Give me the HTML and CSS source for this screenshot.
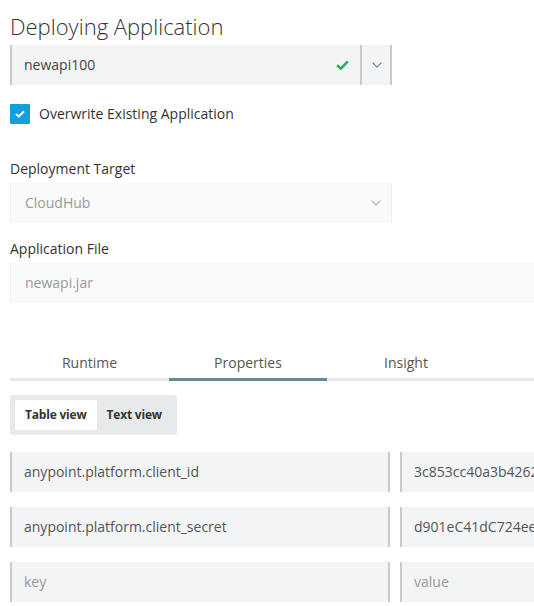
FILE: index.html
```html
<!DOCTYPE html>
<html>
<head>
<meta charset="utf-8">
<link rel="stylesheet" href="styles.css">
</head>
<body>
<div class="page">
  <h1 class="title">Deploying Application</h1>

  <div class="combo">
    <div class="combo-field">
      <span class="combo-text">newapi100</span>
      <svg class="ok" width="13" height="10" viewBox="0 0 13 10"><path d="M1.2 5.2 L4.8 8.6 L11.8 1.4" fill="none" stroke="#1fb25a" stroke-width="2.6" stroke-linejoin="miter"/></svg>
    </div>
    <div class="combo-btn">
      <svg width="10" height="6" viewBox="0 0 10 6"><polyline points="0.6,0.6 5,5.2 9.4,0.6" fill="none" stroke="#6f8092" stroke-width="1.2"/></svg>
    </div>
  </div>

  <label class="check-row">
    <span class="checkbox">
      <svg width="10" height="8" viewBox="0 0 10 8"><path d="M1 4 L3.8 6.6 L9 1.2" fill="none" stroke="#fff" stroke-width="2"/></svg>
    </span>
    <span class="check-label">Overwrite Existing Application</span>
  </label>

  <div class="group first">
    <div class="label">Deployment Target</div>
    <div class="select">
      <span class="muted">CloudHub</span>
      <svg width="10" height="6" viewBox="0 0 10 6"><polyline points="0.6,0.6 5,5.2 9.4,0.6" fill="none" stroke="#a7b0b9" stroke-width="1.1"/></svg>
    </div>
  </div>

  <div class="group">
    <div class="label">Application File</div>
    <div class="file-input"><span class="muted">newapi.jar</span></div>
  </div>

  <div class="tabs">
    <div class="tab">Runtime</div>
    <div class="tab active">Properties</div>
    <div class="tab">Insight</div>
  </div>

  <div class="toggle">
    <div class="toggle-btn on">Table view</div>
    <div class="toggle-btn">Text view</div>
  </div>

  <div class="rows">
    <div class="row">
      <div class="cell key">anypoint.platform.client_id</div>
      <div class="cell val">3c853cc40a3b4262b8e1a4c9f5e7d8a1</div>
    </div>
    <div class="row">
      <div class="cell key">anypoint.platform.client_secret</div>
      <div class="cell val">d901eC41dC724ee8B39b5a3F6C1e2D04</div>
    </div>
    <div class="row">
      <div class="cell key placeholder">key</div>
      <div class="cell val placeholder">value</div>
    </div>
  </div>
</div>
</body>
</html>
```

FILE: styles.css
```css
html, body {
  margin: 0;
  padding: 0;
  background: #fff;
  overflow: hidden;
}
body {
  font-family: "Open Sans", "Liberation Sans", sans-serif;
  font-size: 14px;
  line-height: 20px;
  color: #333;
}
.page {
  width: 534px;
  padding-left: 10px;
  box-sizing: border-box;
  overflow: hidden;
}
.title {
  margin: 12px 0 5px;
  font-size: 22px;
  line-height: 28px;
  font-weight: 300;
  color: #333;
  white-space: nowrap;
}
.combo {
  display: flex;
  width: 382px;
  height: 40px;
}
.combo-field {
  flex: 1;
  display: flex;
  align-items: center;
  justify-content: space-between;
  background: #f3f4f6;
  border-left: 2px solid #c9cacc;
  border-right: 2px solid #c9cacc;
  padding: 0 11px 0 12px;
}
.combo-text {
  color: #444;
}
.ok {
  display: block;
  margin-top: -1px;
}
.combo-btn {
  width: 28px;
  display: flex;
  align-items: center;
  justify-content: center;
  background: #f3f4f6;
  border-right: 2px solid #c9cacc;
}
.combo-btn svg {
  display: block;
  margin-left: 1px;
}
.check-row {
  display: flex;
  align-items: center;
  margin-top: 19px;
  height: 20px;
}
.checkbox {
  width: 20px;
  height: 20px;
  background: #119fdf;
  border-radius: 1px;
  display: flex;
  align-items: center;
  justify-content: center;
}
.checkbox svg {
  display: block;
}
.check-label {
  margin-left: 9px;
  color: #333;
}
.group {
  margin-top: 16px;
}
.group.first {
  margin-top: 35px;
}
.label {
  margin-bottom: 4px;
  color: #333;
}
.select {
  width: 382px;
  height: 40px;
  box-sizing: border-box;
  display: flex;
  align-items: center;
  justify-content: space-between;
  padding: 0 10px 0 14px;
  background: #f9fafa;
  border-left: 1px solid #f1f2f3;
  border-right: 1px solid #eeeff0;
}
.select svg {
  display: block;
}
.muted {
  color: #999;
}
.file-input {
  width: 600px;
  height: 40px;
  box-sizing: border-box;
  display: flex;
  align-items: center;
  padding-left: 14px;
  background: #f9fafa;
  border-left: 1px solid #f1f2f3;
}
.tabs {
  display: flex;
  margin-top: 43px;
  width: 600px;
  border-bottom: 3px solid #e8e9eb;
}
.tab {
  width: 158px;
  text-align: center;
  padding: 7px 0 5px;
  color: #555;
  border-bottom: 3px solid transparent;
  margin-bottom: -3px;
}
.tab:first-child {
  width: 159px;
}
.tab.active {
  border-bottom-color: #688896;
}
.toggle {
  display: inline-flex;
  margin-top: 14px;
  padding: 5px;
  background: #e8e9eb;
  border-radius: 3px;
}
.toggle-btn {
  height: 30px;
  line-height: 30px;
  padding: 0 10px;
  font-size: 12px;
  font-weight: 700;
  letter-spacing: -0.2px;
  color: #333;
  border-radius: 2px;
}
.toggle-btn.on {
  background: #fff;
}
.rows {
  margin-top: 17px;
  display: flex;
  flex-direction: column;
  gap: 15px;
}
.row {
  display: flex;
  gap: 10px;
}
.cell {
  width: 380px;
  height: 40px;
  box-sizing: border-box;
  flex: none;
  display: flex;
  align-items: center;
  padding-left: 12px;
  background: #f3f4f6;
  border-left: 2px solid #c9cacc;
  border-right: 2px solid #c9cacc;
  color: #555;
  white-space: nowrap;
}
.placeholder {
  color: #999;
}
```
